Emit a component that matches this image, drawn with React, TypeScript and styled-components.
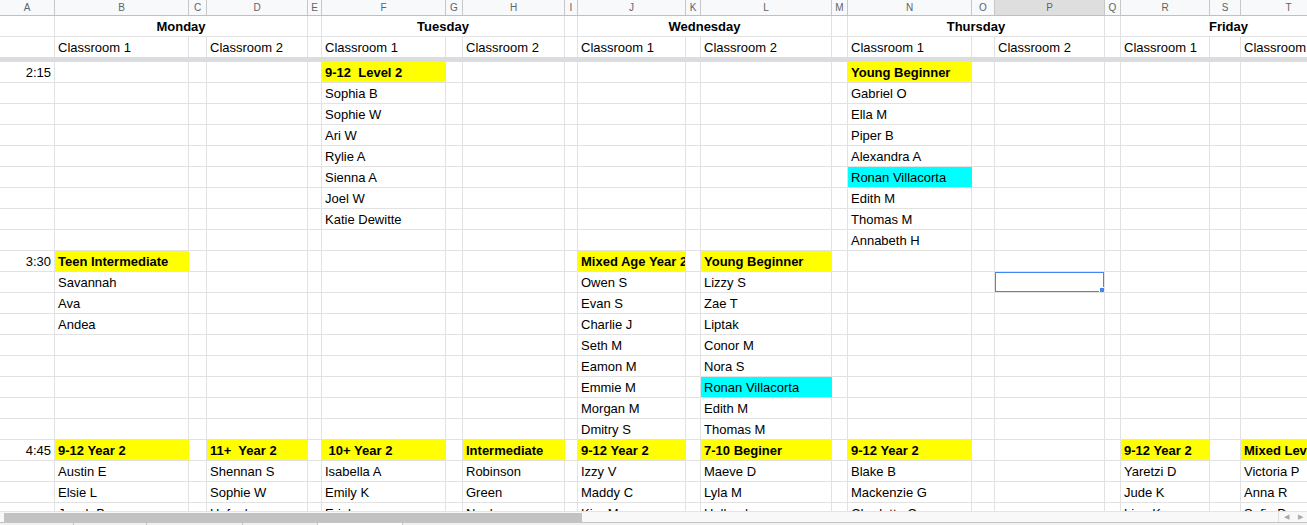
import React from 'react';
import styled, {createGlobalStyle} from "styled-components";

const GlobalStyle = createGlobalStyle`
    html, body {
        margin: 0;
        padding: 0;
        background: #ffffff;
        overflow: hidden;
    }
`

const columns: Array<{ key: string, width: number }> = [
    {key: 'A', width: 55}, {key: 'B', width: 134}, {key: 'C', width: 18}, {key: 'D', width: 101},
    {key: 'E', width: 14}, {key: 'F', width: 124}, {key: 'G', width: 17}, {key: 'H', width: 102},
    {key: 'I', width: 13}, {key: 'J', width: 108}, {key: 'K', width: 15}, {key: 'L', width: 131},
    {key: 'M', width: 16}, {key: 'N', width: 124}, {key: 'O', width: 23}, {key: 'P', width: 110},
    {key: 'Q', width: 16}, {key: 'R', width: 89}, {key: 'S', width: 31}, {key: 'T', width: 96},
]

const template = columns.map(c => `${c.width}px`).join(' ')

// day titles: [label, span] in column order
const days: Array<[string, number]> = [
    ['', 1], ['Monday', 3], ['', 1], ['Tuesday', 3], ['', 1], ['Wednesday', 3],
    ['', 1], ['Thursday', 3], ['', 1], ['Friday', 3],
]

const rooms = ['', 'Classroom 1', '', 'Classroom 2', '', 'Classroom 1', '', 'Classroom 2', '',
    'Classroom 1', '', 'Classroom 2', '', 'Classroom 1', '', 'Classroom 2', '', 'Classroom 1', '', 'Classroom 2']

const ROWS = 22

// "#" marks a yellow class title, "~" a cyan highlight
const at = (start: number, items: string[]) => {
    const out: Record<number, string> = {}
    items.forEach((item, i) => out[start + i] = item)
    return out
}

const body: Record<string, Record<number, string>> = {
    A: {0: '2:15', 9: '3:30', 18: '4:45'},
    B: {
        ...at(9, ['#Teen Intermediate', 'Savannah', 'Ava', 'Andea']),
        ...at(18, ['#9-12 Year 2', 'Austin E', 'Elsie L', 'Jacob B']),
    },
    D: at(18, ['#11+  Year 2', 'Shennan S', 'Sophie W', 'Hufnal']),
    F: {
        ...at(0, ['#9-12  Level 2', 'Sophia B', 'Sophie W', 'Ari W', 'Rylie A', 'Sienna A', 'Joel W', 'Katie Dewitte']),
        ...at(18, ['# 10+ Year 2', 'Isabella A', 'Emily K', 'Eriel']),
    },
    H: at(18, ['#Intermediate', 'Robinson', 'Green', 'Neel']),
    J: {
        ...at(9, ['#Mixed Age Year 2', 'Owen S', 'Evan S', 'Charlie J', 'Seth M', 'Eamon M', 'Emmie M', 'Morgan M', 'Dmitry S']),
        ...at(18, ['#9-12 Year 2', 'Izzy V', 'Maddy C', 'Kira M']),
    },
    L: {
        ...at(9, ['#Young Beginner', 'Lizzy S', 'Zae T', 'Liptak', 'Conor M', 'Nora S', '~Ronan Villacorta', 'Edith M', 'Thomas M']),
        ...at(18, ['#7-10 Beginer', 'Maeve D', 'Lyla M', 'Holland']),
    },
    N: {
        ...at(0, ['#Young Beginner', 'Gabriel O', 'Ella M', 'Piper B', 'Alexandra A', '~Ronan Villacorta', 'Edith M', 'Thomas M', 'Annabeth H']),
        ...at(18, ['#9-12 Year 2', 'Blake B', 'Mackenzie G', 'Charlotte C']),
    },
    R: at(18, ['#9-12 Year 2', 'Yaretzi D', 'Jude K', 'Lina K']),
    T: at(18, ['#Mixed Level', 'Victoria P', 'Anna R', 'Sofia D']),
}

const selected = {col: 'P', row: 10}

type Fill = 'none' | 'yellow' | 'cyan'

const parse = (raw: string): { text: string, fill: Fill } => {
    if (raw.startsWith('#')) return {text: raw.slice(1), fill: 'yellow'}
    if (raw.startsWith('~')) return {text: raw.slice(1), fill: 'cyan'}
    return {text: raw, fill: 'none'}
}

const fillColor = {none: '#ffffff', yellow: '#ffff00', cyan: '#00ffff'}

export default function App() {
    return (
        <>
            <GlobalStyle/>
            <Sheet>
                <GridArea>
                    <Grid>
                        {columns.map(c => (
                            <ColHeader key={c.key} $active={c.key === selected.col}>{c.key}</ColHeader>
                        ))}

                        {days.map(([label, span], i) => (
                            <DayCell key={'d' + i} $span={span}>{label}</DayCell>
                        ))}

                        {rooms.map((room, i) => (
                            <RoomCell key={'r' + i}>{room}</RoomCell>
                        ))}

                        <Freeze/>

                        {Array.from({length: ROWS}).map((_, row) =>
                            columns.map(c => {
                                const {text, fill} = parse(body[c.key]?.[row] ?? '')
                                const isSelected = c.key === selected.col && row === selected.row
                                return (
                                    <Cell key={c.key + row} $fill={fill} $bold={fill === 'yellow'}
                                          $right={c.key === 'A'}>
                                        {text}
                                        {isSelected && <Selection><Handle/></Selection>}
                                    </Cell>
                                )
                            })
                        )}
                    </Grid>
                </GridArea>

                <ScrollBar>
                    <Thumb/>
                    <Arrows>
                        <Arrow>&#9664;</Arrow>
                        <Arrow>&#9654;</Arrow>
                    </Arrows>
                </ScrollBar>
                <TabStrip>
                    <Tab $w={73}/>
                    <Tab $w={72}/>
                    <Tab $w={95}/>
                    <Tab $w={74}/>
                    <Tab $w={84} $current/>
                </TabStrip>
            </Sheet>
        </>
    );
}

const Sheet = styled.div`
    width: 1307px;
    height: 525px;
    display: flex;
    flex-direction: column;
    overflow: hidden;
    font-family: "Liberation Sans", Arial, sans-serif;
    font-size: 13px;
    color: #000000;
`

const GridArea = styled.div`
    flex: 1;
    min-height: 0;
    overflow: hidden;
`

const Grid = styled.div`
    display: grid;
    grid-template-columns: ${template};
    width: max-content;
`

const ColHeader = styled.div<{ $active?: boolean }>`
    height: 16px;
    box-sizing: border-box;
    border-right: 1px solid #c7c7c7;
    border-bottom: 1px solid #c0c0c0;
    background: ${p => p.$active ? '#dedede' : '#f8f9fa'};
    color: #5f6368;
    font-size: 10px;
    line-height: 15px;
    text-align: center;
`

const DayCell = styled.div<{ $span: number }>`
    grid-column: span ${p => p.$span};
    height: 21px;
    box-sizing: border-box;
    border-right: 1px solid #e2e2e2;
    border-bottom: 1px solid #e2e2e2;
    font-weight: bold;
    line-height: 22px;
    text-align: center;
    white-space: nowrap;
    overflow: hidden;
`

const RoomCell = styled.div`
    height: 20px;
    box-sizing: border-box;
    border-right: 1px solid #e2e2e2;
    padding: 0 3px;
    line-height: 22px;
    white-space: nowrap;
    overflow: hidden;
`

const Freeze = styled.div`
    grid-column: 1 / -1;
    height: 5px;
    background: #dadce0;
`

const Cell = styled.div<{ $fill: Fill, $bold?: boolean, $right?: boolean }>`
    position: relative;
    height: 21px;
    box-sizing: border-box;
    border-right: 1px solid ${p => p.$fill === 'none' ? '#e2e2e2' : fillColor[p.$fill]};
    border-bottom: 1px solid #e2e2e2;
    background: ${p => fillColor[p.$fill]};
    padding: 0 3px;
    line-height: 22px;
    font-weight: ${p => p.$bold ? 'bold' : 'normal'};
    text-align: ${p => p.$right ? 'right' : 'left'};
    white-space: pre;
    overflow: hidden;
`

const Selection = styled.div`
    position: absolute;
    left: -1px;
    top: -1px;
    right: -1px;
    bottom: -1px;
    border: 2px solid #4285f4;
    pointer-events: none;
`

const Handle = styled.span`
    position: absolute;
    right: -4px;
    bottom: -4px;
    width: 6px;
    height: 6px;
    background: #4285f4;
    border: 1px solid #ffffff;
`

const ScrollBar = styled.div`
    position: relative;
    height: 11px;
    box-sizing: border-box;
    flex-shrink: 0;
    background: #f8f8f8;
    border-top: 1px solid #e4e4e4;
    display: flex;
    align-items: center;
`

const Thumb = styled.div`
    margin-left: 4px;
    width: 578px;
    height: 9px;
    background: #c2c2c2;
`

const Arrows = styled.div`
    margin-left: auto;
    display: flex;
    height: 100%;
    border-left: 1px solid #e0e0e0;
`

const Arrow = styled.span`
    width: 14px;
    font-size: 7px;
    line-height: 10px;
    text-align: center;
    color: #a8a8a8;
`

const TabStrip = styled.div`
    height: 3px;
    box-sizing: border-box;
    flex-shrink: 0;
    display: flex;
    border-top: 1px solid #c4c4c4;
    background: #f1f1f1;
`

const Tab = styled.div<{ $w: number, $current?: boolean }>`
    width: ${p => p.$w}px;
    border-right: 1px solid #c4c4c4;
    background: ${p => p.$current ? '#ffffff' : 'transparent'};
`
